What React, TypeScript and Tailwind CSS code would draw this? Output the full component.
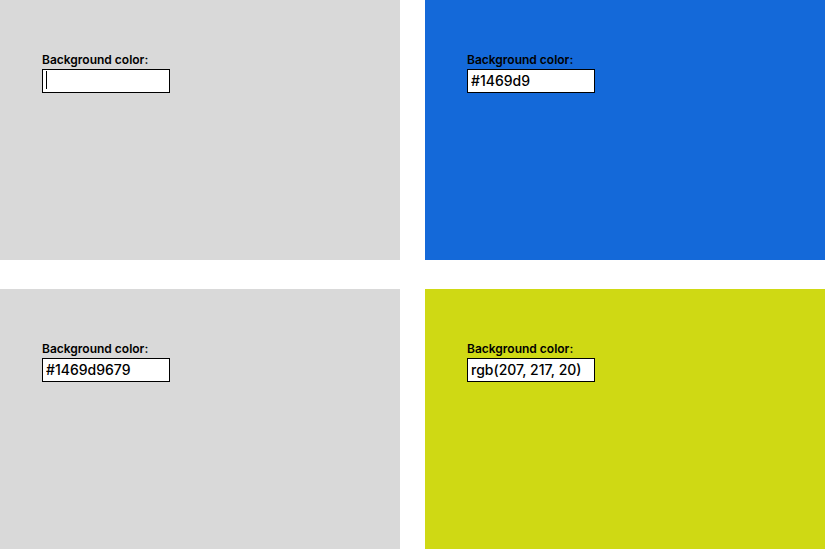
import React from 'react';

interface PanelProps {
  bg: string;
  value: string;
  caret?: boolean;
}

const Panel: React.FC<PanelProps> = ({ bg, value, caret }) => {
  return (
    <div className={`${bg} h-[260px] pl-[42px] pt-[52px]`}>
      <label className="block text-[12px] leading-[15px] font-semibold text-black">Background color:</label>
      <div className="relative mt-px w-[128px] h-[24px]">
        <input
          readOnly
          value={value}
          className="w-full h-full border border-black bg-white px-[3px] text-[14px] font-medium text-black outline-none"
        />
        {caret && <span className="absolute left-[4px] top-[3px] w-px h-[18px] bg-black" />}
      </div>
    </div>
  );
};

export default function App() {
  return (
    <div
      className="w-[825px] h-[549px] bg-white grid grid-cols-[400px_400px] grid-rows-[260px_260px] gap-x-[25px] gap-y-[29px]"
      style={{ fontFamily: 'Inter, "Liberation Sans", sans-serif' }}
    >
      <Panel bg="bg-[#d9d9d9]" value="" caret />
      <Panel bg="bg-[#1469d9]" value="#1469d9" />
      <Panel bg="bg-[#d9d9d9]" value="#1469d9679" />
      <Panel bg="bg-[#cfd914]" value="rgb(207, 217, 20)" />
    </div>
  );
}
